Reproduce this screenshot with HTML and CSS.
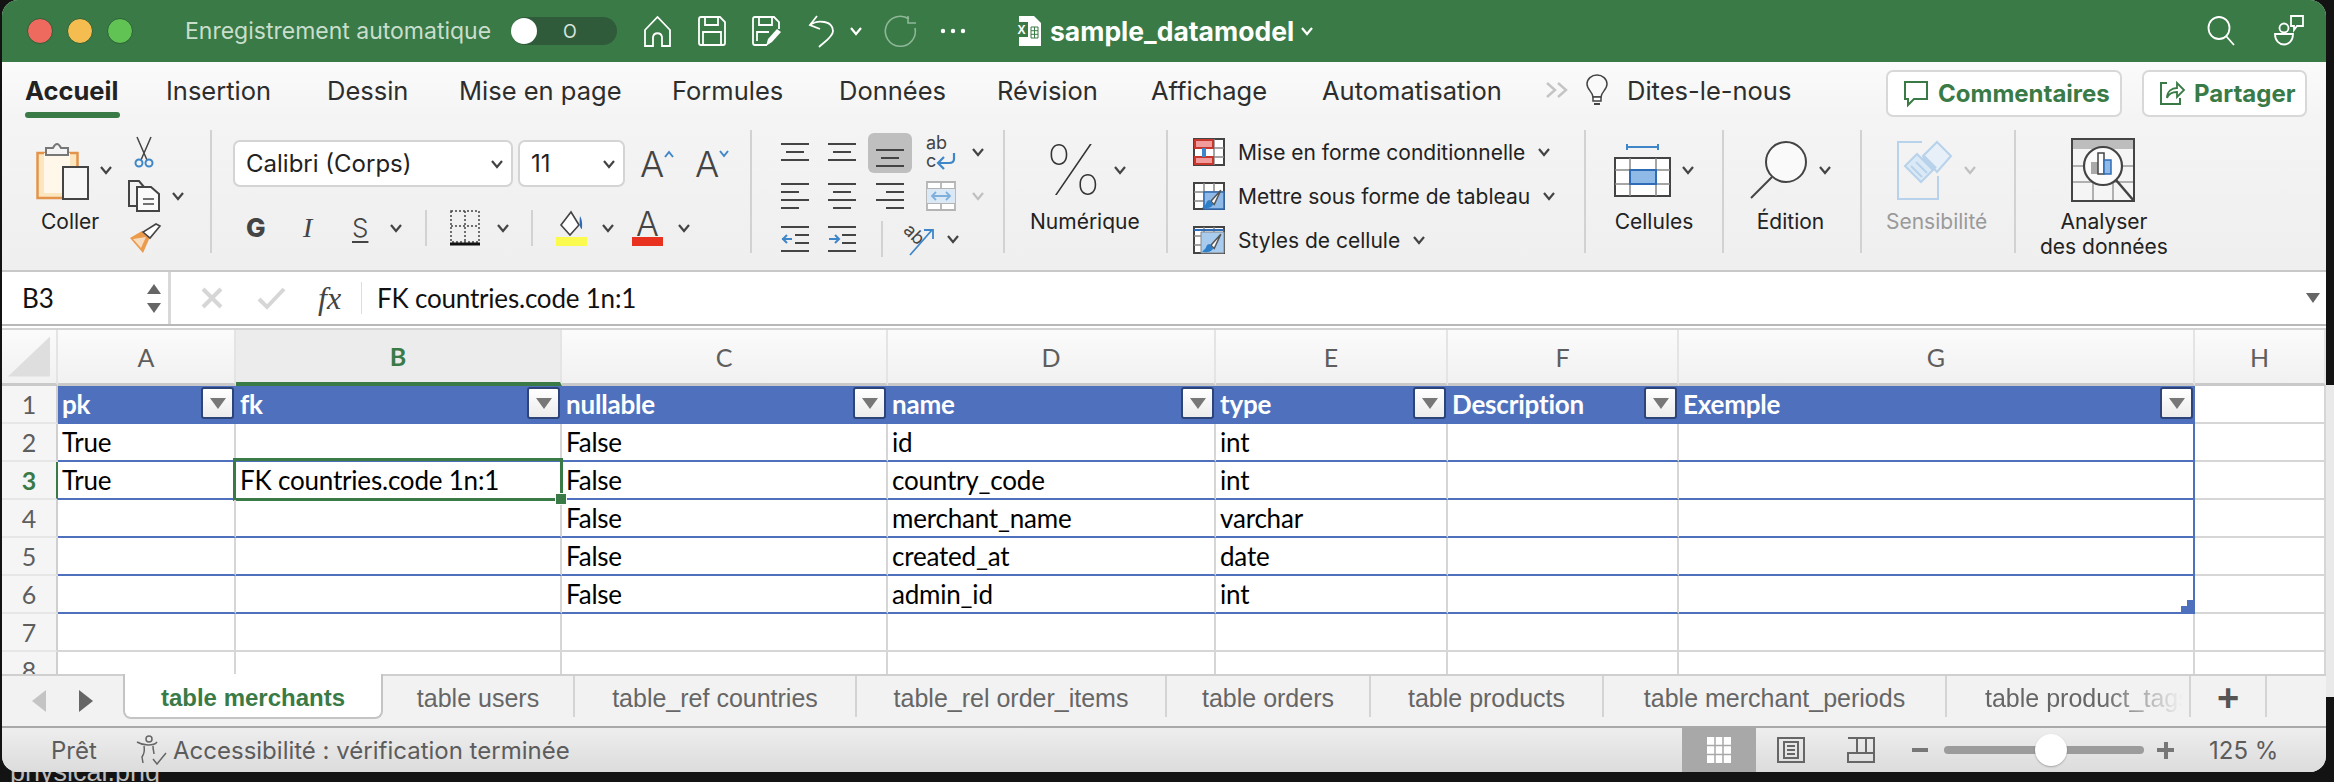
FILE: index.html
```html
<!DOCTYPE html>
<html lang="fr">
<head>
  <meta charset="UTF-8">
  <title>sample_datamodel</title>
  <link rel="stylesheet" href="styles.css">
</head>
<body>
<svg class="defs" width="0" height="0">
  <symbol id="chev" viewBox="0 0 12 10"><path d="M1 2l5 6 5-6" fill="none" stroke="currentColor" stroke-width="2.2"/></symbol>
  <symbol id="tbl" viewBox="0 0 32 28"><path d="M1 1h30v26H1z" fill="#fff" stroke="#444" stroke-width="2"/><path d="M11 1v26M21 1v26M1 10h30M1 19h30" stroke="#888" stroke-width="1.5"/></symbol>
  <symbol id="brushmini" viewBox="0 0 20 20"><path d="M18 2L9 12l3 3z" fill="#fff" stroke="#555" stroke-width="1.4"/><path d="M8 11c-3 0-3 3-4 4l-3 3c4 1 9 0 10-3z" fill="#2f7fc8"/></symbol>
</svg>

<div class="behind"></div>
<div class="under">physical.png</div>

<div class="window">

  <header class="titlebar">
    <div class="lights"><i class="red"></i><i class="amber"></i><i class="green"></i></div>
    <span class="autosave">Enregistrement automatique</span>
    <div class="toggle"><i></i><span>O</span></div>
    <svg width="27" height="31" viewBox="0 0 27 31"><path d="M1 14L13.500 1 26 14v16h-8v-9c-1-5-8-5-9 0v9H1z" fill="none" stroke="#fff" stroke-width="1.800"/></svg>
    <svg width="28" height="30" viewBox="0 0 28 30"><path d="M3 1h19l5 5v21q0 2-2 2H3q-2 0-2-2V3q0-2 2-2z" fill="none" stroke="#fff" stroke-width="1.800"/><path d="M7 1v8h13V1M5 29V16h18v13" fill="none" stroke="#fff" stroke-width="1.800"/></svg>
    <svg width="30" height="31" viewBox="0 0 30 31"><path d="M15 29H3q-2 0-2-2V3q0-2 2-2h19l5 5v7" fill="none" stroke="#fff" stroke-width="1.800"/><path d="M7 1v8h13V1M5 25V16h12" fill="none" stroke="#fff" stroke-width="1.800"/><path d="M14 30l2-7 9-10 4 3-9 10z" fill="#fff"/></svg>
    <svg width="27" height="33" viewBox="0 0 27 33"><path d="M9 1L2 10l10 4" fill="none" stroke="#fff" stroke-width="1.800"/><path d="M2 10c8-6 23-4 23 6 0 6-9 11-14 16" fill="none" stroke="#fff" stroke-width="1.800"/></svg>
    <svg class="chev white" width="12" height="10"><use href="#chev"/></svg>
    <svg width="33" height="33" viewBox="0 0 33 33"><path d="M24 4a15 15 0 1 0 6 9M23 1v7h8" fill="none" stroke="#8fb899" stroke-width="1.600"/></svg>
    <svg width="26" height="6" viewBox="0 0 26 6"><circle cx="3" cy="3" r="2.200" fill="#fff"/><circle cx="13" cy="3" r="2.200" fill="#fff"/><circle cx="23" cy="3" r="2.200" fill="#fff"/></svg>
    <svg width="27" height="30" viewBox="0 0 27 30"><path d="M4 0h15l7 7v23H4z" fill="#fff"/><path d="M0 6h13v15H0z" fill="#3a7a46"/><text x="2.500" y="18" class="xl-x">X</text><path d="M16 11h7v11h-7zM19.500 11v11M16 14.700h7M16 18.300h7" fill="none" stroke="#3a7a46" stroke-width="1"/></svg>
    <span class="docname">sample_datamodel</span>
    <svg class="chev white" width="14" height="10"><use href="#chev"/></svg>
    <svg width="28" height="30" viewBox="0 0 28 30"><ellipse cx="12" cy="12" rx="10.500" ry="11" fill="none" stroke="#fff" stroke-width="1.800"/><path d="M19 20l8 9" stroke="#fff" stroke-width="1.800"/></svg>
    <svg width="32" height="32" viewBox="0 0 32 32"><circle cx="11" cy="13" r="4.500" fill="none" stroke="#fff" stroke-width="1.800"/><path d="M2 19h18c0 14-18 14-18 0z" fill="none" stroke="#fff" stroke-width="1.800"/><path d="M18 1h12v10h-6l-3 4v-4h-3z" fill="none" stroke="#fff" stroke-width="1.800"/></svg>
  </header>

  <nav class="tabs">
    <span class="tab on">Accueil</span>
    <span class="tab">Insertion</span>
    <span class="tab">Dessin</span>
    <span class="tab">Mise en page</span>
    <span class="tab">Formules</span>
    <span class="tab">Données</span>
    <span class="tab">Révision</span>
    <span class="tab">Affichage</span>
    <span class="tab">Automatisation</span>
    <svg width="24" height="16" viewBox="0 0 24 16"><path d="M2 1l8 7-8 7M13 1l8 7-8 7" fill="none" stroke="#c4c4c4" stroke-width="2.400"/></svg>
    <svg width="22" height="30" viewBox="0 0 22 30"><path d="M7 22c0-5-6-7-6-13a10 9 0 0 1 20 0c0 6-6 8-6 13z" fill="#fafafa" stroke="#444" stroke-width="1.500"/><path d="M7 22h8v4H7z" fill="#fff" stroke="#444" stroke-width="1.500"/><path d="M8 29h6" stroke="#444" stroke-width="2"/></svg>
    <span class="tab">Dites-le-nous</span>
    <button class="share"><svg width="26" height="26" viewBox="0 0 26 26"><path d="M2 2h22v17H11l-6 6v-6H2z" fill="none" stroke="#3a7a46" stroke-width="2"/></svg>Commentaires</button>
    <button class="share"><svg width="26" height="26" viewBox="0 0 26 26"><path d="M8 3H2v21h19v-6" fill="none" stroke="#3a7a46" stroke-width="2"/><path d="M8 18c0-7 5-10 10-10V3l7 7-7 7v-5c-4 0-8 1-10 6z" fill="none" stroke="#3a7a46" stroke-width="1.800"/></svg>Partager</button>
  </nav>

  <section class="ribbon">

    <div class="grp g-paste">
      <div class="big">
        <div class="big-icon">
          <svg width="53" height="60" viewBox="0 0 53 60"><path d="M1.500 13h40v45h-40z" fill="#fbe6bf" stroke="#e3934a" stroke-width="2.500"/><path d="M8 13h26v40H8z" fill="#fff8ea"/><path d="M10 15V8h7q4-8 8 0h7v7z" fill="#f4f4f4" stroke="#777" stroke-width="2"/><path d="M27 27h25v32H27z" fill="#f7f7f7" stroke="#444" stroke-width="2"/></svg>
          <svg class="chev" width="12" height="10"><use href="#chev"/></svg>
        </div>
        <span class="lbl">Coller</span>
      </div>
      <div class="clip-tools">
        <svg width="32" height="32" viewBox="0 0 32 32"><path d="M9 1l10 23M23 1L13 24" stroke="#444" stroke-width="1.500"/><circle cx="11" cy="27" r="3.500" fill="none" stroke="#3f86c9" stroke-width="2"/><circle cx="21" cy="27" r="3.500" fill="none" stroke="#3f86c9" stroke-width="2"/></svg>
        <div class="row-ic">
          <svg width="32" height="32" viewBox="0 0 32 32"><path d="M9 26H1V1h10l5 6" fill="none" stroke="#444" stroke-width="2"/><path d="M9 7h14l8 7v17H9z" fill="#fafafa" stroke="#444" stroke-width="2"/><path d="M15 19h11M15 24h11" stroke="#444" stroke-width="1.500"/></svg>
          <svg class="chev" width="12" height="10"><use href="#chev"/></svg>
        </div>
        <svg width="33" height="29" viewBox="0 0 33 29"><path d="M2 14l13 15 7-16-8-6z" fill="#ec9a4b"/><path d="M5 15l8 9 5-11" fill="#fff" opacity=".65"/><path d="M15 8l7 6 10-12-4-2z" fill="#fff" stroke="#444" stroke-width="1.600"/></svg>
      </div>
    </div>

    <div class="grp g-font">
      <div class="font-top">
        <div class="select font-name">Calibri (Corps)<svg class="chev" width="12" height="10"><use href="#chev"/></svg></div>
        <div class="select font-size">11<svg class="chev" width="12" height="10"><use href="#chev"/></svg></div>
        <span class="grow up">A<svg width="10" height="8" viewBox="0 0 10 8"><path d="M1 7l4-5 4 5" fill="none" stroke="#3f86c9" stroke-width="2"/></svg></span>
        <span class="grow down">A<svg width="10" height="8" viewBox="0 0 10 8"><path d="M1 1l4 5 4-5" fill="none" stroke="#3f86c9" stroke-width="2"/></svg></span>
      </div>
      <div class="font-bot">
        <b class="fmt">G</b>
        <i class="fmt">I</i>
        <span class="fmt und">S</span>
        <svg class="chev" width="12" height="10"><use href="#chev"/></svg>
        <i class="vsep"></i>
        <svg width="30" height="36" viewBox="0 0 30 36"><path d="M1 1h28v31H1zM15 1v31M1 16h28" fill="none" stroke="#444" stroke-width="1.500" stroke-dasharray="2 2"/><path d="M0 34h30" stroke="#111" stroke-width="3"/></svg>
        <svg class="chev" width="12" height="10"><use href="#chev"/></svg>
        <i class="vsep"></i>
        <div class="swatch"><svg width="31" height="26" viewBox="0 0 31 26"><path d="M5 14L15 1l8 13-9 10z" fill="#fff" stroke="#444" stroke-width="1.600"/><path d="M24 5c3 5 2 11 2 13-2 0-3-5-2-13z" fill="#2f6cb5"/></svg><i class="bar yellow"></i></div>
        <svg class="chev" width="12" height="10"><use href="#chev"/></svg>
        <div class="swatch"><span class="fcolor">A</span><i class="bar redbar"></i></div>
        <svg class="chev" width="12" height="10"><use href="#chev"/></svg>
      </div>
    </div>

    <div class="grp g-align">
      <svg width="28" height="20" viewBox="0 0 28 20"><path d="M0 2h28M5 10h18M0 18h28" stroke="#444" stroke-width="2"/></svg>
      <svg width="28" height="20" viewBox="0 0 28 20"><path d="M0 2h28M5 10h18M0 18h28" stroke="#444" stroke-width="2"/></svg>
      <div class="pressed"><svg width="28" height="20" viewBox="0 0 28 20"><path d="M0 2h28M5 10h18M0 18h28" stroke="#444" stroke-width="2"/></svg></div>
      <svg class="wrap" width="30" height="36" viewBox="0 0 30 36"><text x="0" y="15" class="ab">ab</text><text x="0" y="33" class="ab">c</text><path d="M28 19v6q0 4-5 4H13m5-6l-6 6 6 6" fill="none" stroke="#3f86c9" stroke-width="2.200"/></svg>
      <svg class="chev" width="12" height="10"><use href="#chev"/></svg>

      <svg width="28" height="28" viewBox="0 0 28 28"><path d="M0 2h28M0 10h18M0 18h28M0 26h18" stroke="#444" stroke-width="2"/></svg>
      <svg width="28" height="28" viewBox="0 0 28 28"><path d="M0 2h28M5 10h18M0 18h28M5 26h18" stroke="#444" stroke-width="2"/></svg>
      <svg class="cell-ic" width="28" height="28" viewBox="0 0 28 28"><path d="M0 2h28M10 10h18M0 18h28M10 26h18" stroke="#444" stroke-width="2"/></svg>
      <svg class="wrap" width="30" height="30" viewBox="0 0 30 30"><path d="M1 1h28v28H1zM1 8h28M1 22h28M15 1v7M15 22v7" fill="#fff" stroke="#b4b4b4" stroke-width="1.800"/><path d="M1 8h28v14H1z" fill="#dbe9f6"/><path d="M6 15h18M10 11l-4 4 4 4M20 11l4 4-4 4" fill="none" stroke="#7fb0dc" stroke-width="1.800"/></svg>
      <svg class="chev pale" width="12" height="10"><use href="#chev"/></svg>

      <svg width="28" height="28" viewBox="0 0 28 28"><path d="M0 2h28M14 10h14M14 18h14M0 26h28" stroke="#444" stroke-width="2"/><path d="M11 14H1m5-4l-4 4 4 4" fill="none" stroke="#3f86c9" stroke-width="2"/></svg>
      <svg width="28" height="28" viewBox="0 0 28 28"><path d="M0 2h28M14 10h14M14 18h14M0 26h28" stroke="#444" stroke-width="2"/><path d="M1 14h10M7 10l4 4-4 4" fill="none" stroke="#3f86c9" stroke-width="2"/></svg>
      <div class="orient">
        <i class="vsep"></i>
        <svg width="34" height="34" viewBox="0 0 34 34"><text x="1" y="16" class="ab" transform="rotate(45 9 12)">ab</text><path d="M8 33L30 8m-8 0h9v9" fill="none" stroke="#3f86c9" stroke-width="1.800"/></svg>
        <svg class="chev" width="12" height="10"><use href="#chev"/></svg>
      </div>
    </div>

    <div class="grp g-num">
      <div class="big">
        <div class="big-icon"><span class="pct">%</span><svg class="chev" width="12" height="10"><use href="#chev"/></svg></div>
        <span class="lbl">Numérique</span>
      </div>
    </div>

    <div class="grp g-styles">
      <div class="style-row">
        <svg width="32" height="28" viewBox="0 0 32 28"><use href="#tbl"/><path d="M2 2h18v8H2zM2 19h18v7H2z" fill="#f29b9b" stroke="#c8372d" stroke-width="2"/><path d="M11 10v9" stroke="#3f86c9" stroke-width="4"/></svg>
        <span>Mise en forme conditionnelle</span>
        <svg class="chev" width="12" height="10"><use href="#chev"/></svg>
      </div>
      <div class="style-row">
        <svg width="32" height="28" viewBox="0 0 32 28"><use href="#tbl"/><path d="M11 10h20v17H11z" fill="#8fb9e6" stroke="#2f6cb5" stroke-width="1.500"/><use href="#brushmini" x="8" y="6" width="22" height="22"/></svg>
        <span>Mettre sous forme de tableau</span>
        <svg class="chev" width="12" height="10"><use href="#chev"/></svg>
      </div>
      <div class="style-row">
        <svg width="32" height="28" viewBox="0 0 32 28"><use href="#tbl"/><path d="M8 6h23v21H8z" fill="#a9cbee" stroke="#888" stroke-width="1"/><path d="M1 4h30" stroke="#2f6cb5" stroke-width="2"/><use href="#brushmini" x="8" y="6" width="22" height="22"/></svg>
        <span>Styles de cellule</span>
        <svg class="chev" width="12" height="10"><use href="#chev"/></svg>
      </div>
    </div>

    <div class="grp g-cells">
      <div class="big">
        <div class="big-icon">
          <svg width="57" height="54" viewBox="0 0 57 54"><path d="M13 4h31M13 1v6M44 1v6" stroke="#3f86c9" stroke-width="2"/><path d="M1 15h55v38H1z" fill="#fff" stroke="#444" stroke-width="2"/><path d="M16 15v38M42 15v38M1 27h55M1 41h55" stroke="#888" stroke-width="1.500"/><path d="M16 27h26v14H16z" fill="#8fb9e6" stroke="#2f6cb5" stroke-width="2"/></svg>
          <svg class="chev" width="12" height="10"><use href="#chev"/></svg>
        </div>
        <span class="lbl">Cellules</span>
      </div>
    </div>

    <div class="grp g-edit">
      <div class="big">
        <div class="big-icon">
          <svg width="58" height="58" viewBox="0 0 58 58"><ellipse cx="36" cy="21" rx="20" ry="20" fill="#fafafa" stroke="#444" stroke-width="2"/><path d="M22 36L1 57" stroke="#444" stroke-width="2"/></svg>
          <svg class="chev" width="12" height="10"><use href="#chev"/></svg>
        </div>
        <span class="lbl">Édition</span>
      </div>
    </div>

    <div class="grp g-sens">
      <div class="big">
        <div class="big-icon">
          <svg width="56" height="60" viewBox="0 0 56 60"><path d="M25 2H1v57h40V36" fill="none" stroke="#b7d2ea" stroke-width="2"/><path d="M8 26L24 42 36 30 20 14z" fill="#dbe9f6" stroke="#b7d2ea" stroke-width="2"/><path d="M14 26l11 11M19 22l11 11" stroke="#b7d2ea" stroke-width="2"/><path d="M26 16L40 2l14 14-14 16z" fill="#e7f0f9" stroke="#b7d2ea" stroke-width="2"/><path d="M26 17l12 12" stroke="#b7d2ea" stroke-width="5"/></svg>
          <svg class="chev pale" width="12" height="10"><use href="#chev"/></svg>
        </div>
        <span class="lbl dim">Sensibilité</span>
      </div>
    </div>

    <div class="grp g-data">
      <div class="big">
        <div class="big-icon">
          <svg width="65" height="64" viewBox="0 0 65 64"><path d="M1 1h62v62H1z" fill="#f5f5f5" stroke="#444" stroke-width="2"/><path d="M2 2h60v9H2z" fill="#bdbdbd"/><path d="M2 28h60M2 44h60M22 44v18M42 44v18" stroke="#999" stroke-width="1.500"/><circle cx="32" cy="28" r="19" fill="#fbfbfb" stroke="#444" stroke-width="2.200"/><path d="M20 24h7v12h-7z" fill="#aaa"/><path d="M27 15h6v21h-6z" fill="#fff" stroke="#444" stroke-width="1.500"/><path d="M33 22h7v14h-7z" fill="#8fb9e6" stroke="#2f6cb5" stroke-width="1.500"/><path d="M45 42l18 21" stroke="#444" stroke-width="2.500"/></svg>
        </div>
        <span class="lbl">Analyser<br>des données</span>
      </div>
    </div>
  </section>

  <div class="formula">
    <div class="namebox">
      <span>B3</span>
      <div class="spin"><i class="tri-up"></i><i class="tri-down"></i></div>
    </div>
    <div class="fbar">
      <svg width="22" height="22" viewBox="0 0 22 22"><path d="M2 2l18 18M20 2L2 20" stroke="#d6d6d6" stroke-width="4"/></svg>
      <svg width="30" height="22" viewBox="0 0 30 22"><path d="M2 12l8 8L27 2" fill="none" stroke="#d6d6d6" stroke-width="4"/></svg>
      <span class="fx">fx</span>
      <i class="fsep"></i>
      <span class="ftext">FK countries.code 1n:1</span>
      <i class="tri-down fdrop"></i>
    </div>
  </div>

  <div class="sheet">
    <div class="ch corner"><i></i></div>
    <div class="ch">A</div><div class="ch sel">B</div><div class="ch">C</div><div class="ch">D</div><div class="ch">E</div><div class="ch">F</div><div class="ch">G</div><div class="ch">H</div>

    <div class="rh">1</div>
    <div class="c th">pk<i class="flt"></i></div><div class="c th">fk<i class="flt"></i></div><div class="c th">nullable<i class="flt"></i></div><div class="c th">name<i class="flt"></i></div><div class="c th">type<i class="flt"></i></div><div class="c th">Description<i class="flt"></i></div><div class="c th">Exemple<i class="flt"></i></div><div class="c"></div>

    <div class="rh">2</div>
    <div class="c t">True</div><div class="c t"></div><div class="c t">False</div><div class="c t">id</div><div class="c t">int</div><div class="c t"></div><div class="c t end"></div><div class="c"></div>

    <div class="rh sel">3</div>
    <div class="c t">True</div><div class="c t cur">FK countries.code 1n:1</div><div class="c t">False</div><div class="c t">country_code</div><div class="c t">int</div><div class="c t"></div><div class="c t end"></div><div class="c"></div>

    <div class="rh">4</div>
    <div class="c t"></div><div class="c t"></div><div class="c t">False</div><div class="c t">merchant_name</div><div class="c t">varchar</div><div class="c t"></div><div class="c t end"></div><div class="c"></div>

    <div class="rh">5</div>
    <div class="c t"></div><div class="c t"></div><div class="c t">False</div><div class="c t">created_at</div><div class="c t">date</div><div class="c t"></div><div class="c t end"></div><div class="c"></div>

    <div class="rh">6</div>
    <div class="c t"></div><div class="c t"></div><div class="c t">False</div><div class="c t">admin_id</div><div class="c t">int</div><div class="c t"></div><div class="c t end grip"></div><div class="c"></div>

    <div class="rh">7</div>
    <div class="c"></div><div class="c"></div><div class="c"></div><div class="c"></div><div class="c"></div><div class="c"></div><div class="c"></div><div class="c"></div>

    <div class="rh">8</div>
    <div class="c"></div><div class="c"></div><div class="c"></div><div class="c"></div><div class="c"></div><div class="c"></div><div class="c"></div><div class="c"></div>
  </div>

  <div class="sheets">
    <div class="nav"><i class="tri-left"></i><i class="tri-right"></i></div>
    <div class="st on">table merchants</div>
    <div class="st">table users</div>
    <div class="st">table_ref countries</div>
    <div class="st">table_rel order_items</div>
    <div class="st">table orders</div>
    <div class="st">table products</div>
    <div class="st">table merchant_periods</div>
    <div class="st cut"><span>table product_tags</span></div>
    <div class="st add">+</div>
  </div>

  <footer class="status">
    <span>Prêt</span>
    <svg width="32" height="30" viewBox="0 0 32 30"><circle cx="13" cy="4" r="3" fill="none" stroke="#666" stroke-width="1.500"/><path d="M1 7c5 3 7 3 11 3s7 0 9-3M8 11c1 5 0 8-2 11l1 6M17 11c0 4 1 6 1 8" fill="none" stroke="#666" stroke-width="1.500"/><path d="M17 24l4 5 9-11" fill="none" stroke="#666" stroke-width="1.500"/></svg>
    <span>Accessibilité : vérification terminée</span>
    <div class="view on"><svg width="24" height="26" viewBox="0 0 24 26"><path d="M0 0h24v26H0z" fill="#fff"/><path d="M8 0v26M16 0v26M0 8.500h24M0 17.500h24" stroke="#a8a8a8" stroke-width="1.500"/></svg></div>
    <div class="view"><svg width="28" height="26" viewBox="0 0 28 26"><path d="M1 1h26v24H1z" fill="none" stroke="#666" stroke-width="2"/><path d="M7 5h14v16H7z" fill="none" stroke="#666" stroke-width="2"/><path d="M10 9h8M10 13h8M10 17h8" stroke="#666" stroke-width="2"/></svg></div>
    <div class="view"><svg width="28" height="26" viewBox="0 0 28 26"><path d="M1 1h26v24H1V16h26M10 1v15M19 1v15" fill="none" stroke="#666" stroke-width="2"/></svg></div>
    <div class="zoombtn"><i class="minus"></i></div>
    <div class="slider"><i></i></div>
    <div class="zoombtn"><i class="plus"></i></div>
    <span class="pctlabel">125 %</span>
  </footer>
</div>
</body>
</html>
```

FILE: styles.css
```css
:root {
  --green: #3a7a46;
  --blue: #4f71bd;
  --line: #d6d6d6;
  --ui: "Inter", "Liberation Sans", sans-serif;
  --cell: "Lato", "Liberation Sans", sans-serif;
}
html, body {
  margin: 0;
  padding: 0;
  background: #131313;
  width: 2334px;
  height: 782px;
  overflow: hidden;
  font-family: var(--ui);
}
i { display: block; font-style: normal; }
svg { display: block; overflow: visible; }
.defs { position: absolute; }
.chev { color: #444; flex: none; }
.chev.white { color: #fff; }
.chev.pale { color: #c0c0c0; }

.behind {
  position: absolute;
  top: 385px;
  right: 0;
  width: 8px;
  height: 312px;
  background: #e9e9e9;
}
.under {
  position: absolute;
  left: 10px;
  top: 755px;
  font: 27px/34px "Liberation Sans", sans-serif;
  color: #bdbdbd;
}
.window {
  position: relative;
  margin-left: 2px;
  width: 2324px;
  height: 772px;
  border-radius: 16px;
  overflow: hidden;
  background: #f2f2f2;
  display: flex;
  flex-direction: column;
}

/* title bar */
.titlebar {
  height: 62px;
  flex: none;
  background: var(--green);
  padding-left: 25px;
  display: grid;
  grid-template-columns: 158px 326px 133px 54px 54px 56px 42px 35px 55px 75px 35px 250px 907px 66px 1fr;
  align-items: center;
}
.lights { display: flex; gap: 14px; }
.lights i { width: 26px; height: 26px; border-radius: 50%; border: 1px solid #2c5f37; box-sizing: border-box; }
.red { background: #ee6a5f; }
.amber { background: #f5bd4f; }
.green { background: #61c354; }
.autosave { color: #c9decd; font-size: 23px; white-space: nowrap; }
.toggle {
  width: 106px;
  height: 28px;
  border-radius: 14px;
  background: #2f5b3a;
  display: flex;
  align-items: center;
  color: #d8e4da;
  font-size: 18px;
}
.toggle i { width: 26px; height: 26px; border-radius: 50%; background: #fff; margin-right: 26px; }
.xl-x { font: 700 12px "Liberation Sans", sans-serif; fill: #fff; }
.docname { color: #fff; font-size: 26.500px; font-weight: 700; white-space: nowrap; }

/* tabs */
.tabs {
  height: 56px;
  flex: none;
  padding-left: 23px;
  background: linear-gradient(#fbfbfb, #f4f4f4);
  display: grid;
  grid-template-columns: 141px 161px 132px 213px 167px 158px 154px 171px 223px 41px 41px 259px 236px 165px;
  align-items: center;
  font-size: 25.500px;
  color: #2d2d2d;
}
.tab {
  height: 56px;
  box-sizing: border-box;
  padding-top: 14px;
  line-height: 30px;
  white-space: nowrap;
  position: relative;
}
.tab.on { font-weight: 700; color: #222; }
.tab.on::after {
  content: "";
  position: absolute;
  left: 0;
  bottom: 0;
  width: 95px;
  height: 6px;
  border-radius: 3px;
  background: var(--green);
}
.share {
  height: 47px;
  margin-top: 6px;
  width: 236px;
  box-sizing: border-box;
  background: #fff;
  border: 2px solid #d8d8d8;
  border-radius: 7px;
  color: var(--green);
  font: 700 24px var(--ui);
  display: flex;
  align-items: center;
  gap: 9px;
  padding: 0 0 0 15px;
  white-space: nowrap;
}
.share:last-child { width: 165px; padding-left: 15px; margin-left: 20px; gap: 9px; }

/* ribbon */
.ribbon {
  height: 152px;
  flex: none;
  background: linear-gradient(#f4f4f4, #efefef);
  display: flex;
  padding-top: 12px;
  box-sizing: border-box;
  font-size: 21px;
  color: #222;
}
.grp {
  height: 123px;
  box-sizing: border-box;
  border-right: 2px solid #d2d2d2;
  flex: none;
}
.g-paste { width: 210px; padding-left: 34px; display: flex; }
.g-font { width: 540px; padding: 10px 0 0 21px; }
.g-align {
  width: 253px;
  padding-left: 29px;
  display: grid;
  grid-template-columns: 47px 40px 58px 46px 20px;
  grid-template-rows: 44px 44px 41px;
  align-items: center;
}
.g-num { width: 163px; padding-left: 25px; }
.g-styles { width: 418px; padding-left: 25px; }
.g-cells { width: 138px; padding-left: 28px; }
.g-edit { width: 138px; padding-left: 26px; }
.g-sens { width: 154px; padding-left: 24px; }
.g-data { width: 200px; border: 0; padding-left: 24px; }

.big {
  display: grid;
  grid-template-rows: 79px auto;
  width: max-content;
  justify-items: center;
}
.big-icon { display: flex; align-items: center; gap: 11px; }
.lbl { line-height: 25px; text-align: center; white-space: nowrap; }
.lbl.dim { color: #9a9a9a; }

.g-paste .big { width: 68px; justify-items: start; }
.g-paste .lbl { margin-left: 5px; }
.clip-tools {
  margin-left: 24px;
  padding-top: 6px;
  display: flex;
  flex-direction: column;
  gap: 12px;
}
.row-ic { display: flex; align-items: center; gap: 12px; }

.font-top { display: flex; align-items: center; gap: 5px; }
.select {
  height: 47px;
  box-sizing: border-box;
  background: #fff;
  border: 2px solid #d4d4d4;
  border-radius: 7px;
  display: flex;
  align-items: center;
  justify-content: space-between;
  padding: 0 8px 0 11px;
  font-size: 24px;
  color: #222;
}
.font-name { width: 280px; }
.font-size { width: 107px; }
.grow {
  display: flex;
  align-items: flex-start;
  width: 40px;
  margin-left: 10px;
  font-size: 36px;
  font-weight: 300;
  line-height: 36px;
  color: #444;
}
.grow svg { margin-top: 4px; }
.font-bot {
  margin-top: 23px;
  padding-left: 13px;
  height: 36px;
  display: grid;
  grid-template-columns: 57px 49px 38px 35px 25px 47px 34px 25px 46px 30px 46px 20px;
  align-items: center;
}
.fmt { font-size: 26px; color: #444; line-height: 30px; }
b.fmt { font-weight: 800; }
i.fmt { font-family: "Liberation Serif", serif; font-style: italic; font-size: 28px; display: inline; }
.und { text-decoration: underline; text-underline-offset: 4px; font-weight: 300; }
.vsep { width: 2px; height: 36px; background: #d2d2d2; }
.swatch { width: 31px; }
.bar { width: 31px; height: 9px; }
.yellow { background: #fbfb4f; }
.redbar { background: #e8321f; }
.fcolor {
  display: block;
  height: 27px;
  line-height: 27px;
  font-size: 34px;
  font-weight: 300;
  color: #444;
  text-align: center;
}

.pressed {
  width: 44px;
  height: 40px;
  margin-top: 2px;
  background: #bfbfbf;
  border-radius: 6px;
  display: flex;
  align-items: flex-end;
  justify-content: center;
  padding-bottom: 5px;
  box-sizing: border-box;
}
.cell-ic { margin-left: 8px; }
.ab { font: 18px var(--ui); fill: #444; }
.orient {
  grid-column: 3 / 6;
  display: flex;
  align-items: center;
  margin-left: 13px;
}
.orient svg:nth-child(2) { margin: 0 11px 0 19px; }
.pct { font-size: 70px; font-weight: 100; line-height: 70px; color: #333; }

.style-row {
  height: 44px;
  display: flex;
  align-items: center;
  white-space: nowrap;
}
.style-row span { margin: 0 13px 0 13px; }

/* formula bar */
.formula {
  height: 60px;
  flex: none;
  box-sizing: border-box;
  border-top: 2px solid #c8c8c8;
  display: flex;
  background: #fff;
  font-family: var(--cell);
  font-size: 26px;
  color: #111;
  padding-bottom: 6px;
  box-shadow: inset 0 -2px 0 #d4d4d4, inset 0 -4px 0 #fff, inset 0 -6px 0 #b8b8b8;
}
.namebox {
  width: 169px;
  box-sizing: border-box;
  border-right: 3px solid #d8d8d8;
  padding: 0 7px 0 20px;
  display: flex;
  align-items: center;
  justify-content: space-between;
}
.spin { display: flex; flex-direction: column; gap: 9px; }
.tri-up, .tri-down { width: 0; height: 0; border: 7px solid transparent; border-top-width: 0; border-bottom: 10px solid #666; }
.tri-down { border-top: 10px solid #666; border-bottom-width: 0; }
.fbar { flex: 1; display: flex; align-items: center; padding-left: 30px; }
.fbar svg:nth-child(2) { margin-left: 34px; }
.fx { font: italic 32px "Liberation Serif", serif; color: #444; margin-left: 31px; width: 30px; }
.fsep { width: 1px; height: 32px; background: #ddd; margin: 0 15px 0 13px; }
.ftext { flex: 1; letter-spacing: -0.2px; }
.fdrop { margin-right: 6px; }

/* grid */
.sheet {
  height: 344px;
  flex: none;
  overflow: hidden;
  background: #fff;
  display: grid;
  grid-template-columns: 56px 178px 326px 326px 328px 232px 231px 516px 131px;
  grid-template-rows: 56px;
  grid-auto-rows: 38px;
  font-family: var(--cell);
  font-size: 26px;
  color: #000;
}
.ch {
  background: linear-gradient(#fbfbfb, #f1f1f1);
  border-right: 2px solid #e4e4e4;
  border-bottom: 3px solid #c9c9c9;
  color: #5e5e5e;
  font-size: 25px;
  display: flex;
  align-items: center;
  justify-content: center;
  box-sizing: border-box;
}
.ch.sel { background: #ececec; color: var(--green); font-weight: 700; border-bottom: 4px solid var(--green); }
.corner i {
  width: 42px;
  height: 40px;
  background: #dedede;
  clip-path: polygon(100% 0, 100% 100%, 0 100%);
}
.rh {
  background: #f5f5f5;
  border-right: 2px solid #cfcfcf;
  border-bottom: 2px solid #e6e6e6;
  box-sizing: border-box;
  color: #5e5e5e;
  font-size: 25px;
  display: flex;
  align-items: center;
  justify-content: center;
}
.rh.sel { color: var(--green); font-weight: 700; border-right-color: var(--green); }
.c {
  position: relative;
  box-sizing: border-box;
  border-right: 2px solid var(--line);
  border-bottom: 2px solid var(--line);
  padding-left: 4px;
  line-height: 36px;
  white-space: nowrap;
  letter-spacing: -0.2px;
}
.c.th {
  background: var(--blue);
  border-color: var(--blue);
  color: #fff;
  font-weight: 700;
  display: flex;
  justify-content: space-between;
}
.flt {
  width: 33px;
  height: 32px;
  margin: 1px 0 0;
  box-sizing: border-box;
  border: 2px solid #2c4478;
  border-radius: 3px;
  background: linear-gradient(#fff, #ececec);
  position: relative;
}
.flt::after {
  content: "";
  position: absolute;
  left: 7px;
  top: 9px;
  border: 8px solid transparent;
  border-bottom-width: 0;
  border-top: 11px solid #777;
}
.c.t { border-bottom-color: var(--blue); }
.c.end { border-right-color: var(--blue); }
.cur::after {
  content: "";
  position: absolute;
  top: -4px;
  left: -3px;
  right: -3px;
  bottom: -3px;
  border: 3px solid var(--green);
}
.cur::before {
  content: "";
  position: absolute;
  z-index: 1;
  right: -6px;
  bottom: -6px;
  width: 10px;
  height: 10px;
  background: var(--green);
  outline: 1px solid #fff;
}
.grip::after {
  content: "";
  position: absolute;
  right: 0;
  bottom: 0;
  width: 12px;
  height: 12px;
  background: var(--blue);
  clip-path: polygon(50% 0, 100% 0, 100% 100%, 0 100%, 0 50%, 50% 50%);
}

/* sheet tabs */
.sheets {
  height: 54px;
  flex: none;
  box-sizing: border-box;
  border-top: 2px solid #cfcfcf;
  border-bottom: 2px solid #a9a9a9;
  background: #f2f2f2;
  display: grid;
  grid-template-columns: 121px 260px 192px 282px 310px 204px 233px 343px 244px 76px;
  font: 25px "Liberation Sans", sans-serif;
  color: #666;
  align-items: start;
}
.nav { display: flex; gap: 33px; padding: 14px 0 0 30px; }
.tri-left, .tri-right { width: 0; height: 0; border: 11px solid transparent; border-left-width: 0; border-right: 14px solid #c4c4c4; }
.tri-right { border-right-width: 0; border-right-color: transparent; border-left: 14px solid #666; }
.st {
  height: 41px;
  line-height: 44px;
  text-align: center;
  white-space: nowrap;
  border-right: 2px solid #d4d4d4;
  box-sizing: border-box;
  overflow: hidden;
}
.st.on {
  height: 45px;
  margin-top: -2px;
  line-height: 48px;
  background: #fff;
  color: var(--green);
  font-size: 24px;
  font-weight: 700;
  border: 2px solid #c4c4c4;
  border-top: 0;
  border-radius: 0 0 8px 8px;
}
.st.cut { text-align: left; padding-left: 38px; }
.st.cut span {
  display: block;
  -webkit-mask-image: linear-gradient(90deg, #000 58%, transparent 97%);
  mask-image: linear-gradient(90deg, #000 58%, transparent 97%);
}
.st.add { font-size: 38px; font-weight: 700; color: #555; }

/* status bar */
.status {
  flex: 1;
  background: linear-gradient(#eeeeee, #dcdcdc);
  padding-left: 49px;
  display: grid;
  grid-template-columns: 85px 37px 1509px 74px 70px 70px 48px 200px 43px 1fr;
  align-items: center;
  font-size: 24px;
  color: #5c5c5c;
}
.view { height: 100%; display: flex; align-items: center; justify-content: center; }
.view.on { background: #a8a8a8; }
.zoombtn { display: flex; justify-content: center; }
.minus { width: 16px; height: 4px; background: #777; }
.plus {
  width: 17px;
  height: 17px;
  background: linear-gradient(#777, #777) center / 100% 4px no-repeat, linear-gradient(#777, #777) center / 4px 100% no-repeat;
}
.slider { height: 8px; border-radius: 4px; background: #9c9c9c; position: relative; }
.slider i {
  position: absolute;
  left: 91px;
  top: -12px;
  width: 32px;
  height: 32px;
  border-radius: 50%;
  background: #fff;
  box-shadow: 0 1px 2px #0004;
}
.pctlabel { padding-left: 22px; font-size: 24px; white-space: nowrap; }
```
